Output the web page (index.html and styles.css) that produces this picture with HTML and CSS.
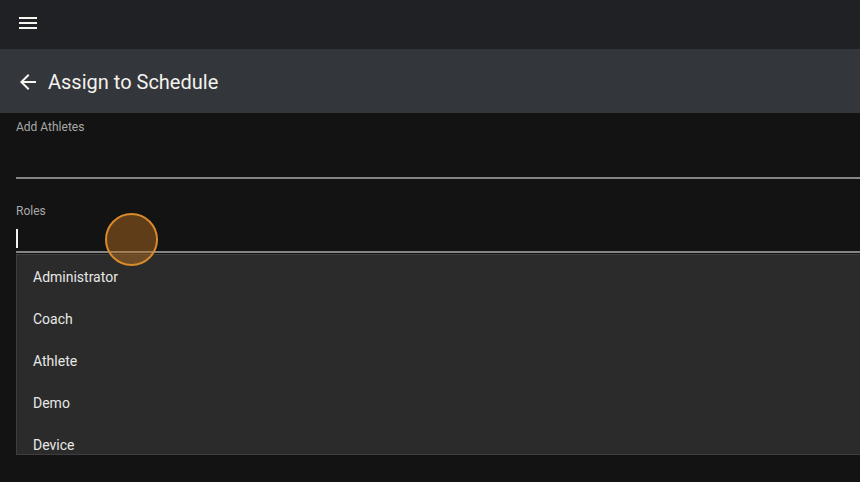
FILE: index.html
```html
<!DOCTYPE html>
<html lang="en">
<head>
  <meta charset="UTF-8">
  <title>Assign to Schedule</title>
  <link rel="stylesheet" href="styles.css">
</head>
<body>
  <header class="topbar">
    <svg class="icon" viewBox="0 0 24 24" width="24" height="24">
      <path d="M3 18h18v-2H3v2zm0-5h18v-2H3v2zm0-7v2h18V6H3z"/>
    </svg>
  </header>

  <div class="titlebar">
    <svg class="icon" viewBox="0 0 24 24" width="24" height="24">
      <path d="M20 11H7.83l5.59-5.59L12 4l-8 8 8 8 1.41-1.41L7.83 13H20v-2z"/>
    </svg>
    <h1>Assign to Schedule</h1>
  </div>

  <main class="content">
    <div class="field">
      <label>Add Athletes</label>
      <div class="input athletes"></div>
    </div>

    <div class="field roles">
      <label>Roles</label>
      <div class="input"><span class="caret"></span></div>
      <ul class="menu">
        <li>Administrator</li>
        <li>Coach</li>
        <li>Athlete</li>
        <li>Demo</li>
        <li>Device</li>
      </ul>
      <div class="touch"></div>
    </div>
  </main>
</body>
</html>
```

FILE: styles.css
```css
body {
  margin: 0;
  background-color: #131313;
  font-family: Roboto, "Liberation Sans", sans-serif;
  color: #ececec;
  overflow: hidden;
}
.icon {
  fill: #f6f5ef;
  display: block;
}
.topbar {
  height: 49px;
  background-color: #202124;
  padding: 11px 0 0 16px;
  box-sizing: border-box;
}
.titlebar {
  height: 64px;
  background-color: #33363b;
  display: flex;
  align-items: center;
  padding: 1px 0 0 16px;
  box-sizing: border-box;
  gap: 8px;
}
.titlebar h1 {
  margin: 0;
  font-size: 20px;
  font-weight: 400;
  color: #f3f2ec;
}
.content {
  padding: 6px 0 0 16px;
  margin-right: -20px;
}
.field label {
  display: block;
  font-size: 12px;
  line-height: 16px;
  color: #a8a8a8;
}
.input {
  border-bottom: 2px solid #858585;
}
.input.athletes {
  height: 42px;
}
.roles {
  position: relative;
  margin-top: 24px;
}
.roles .input {
  height: 22px;
  padding-top: 10px;
}
.caret {
  display: block;
  width: 2px;
  height: 19px;
  background-color: #f2f2f2;
}
.menu {
  list-style: none;
  margin: 1px 0 0;
  padding: 1px 0 0;
  height: 198px;
  overflow: hidden;
  background-color: #2b2b2b;
  border: 1px solid #3e3e3e;
}
.menu li {
  height: 42px;
  line-height: 42px;
  padding-left: 16px;
  font-size: 14px;
  color: #e8e8e6;
}
.touch {
  position: absolute;
  left: 89px;
  top: 10px;
  width: 49px;
  height: 49px;
  border-radius: 50%;
  border: 2px solid #d98a2b;
  background-color: rgba(195, 118, 32, 0.43);
}
```
